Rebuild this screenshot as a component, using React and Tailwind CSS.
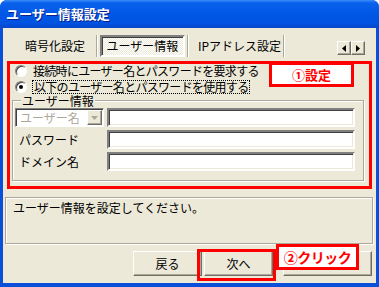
import React from "react";

const raised =
  "border border-t-white border-l-white border-r-[#716f64] border-b-[#716f64] shadow-[inset_-1px_-1px_0_#aca899] bg-[#ece9d8]";
const sunken =
  "border-2 border-t-[#808080] border-l-[#808080] border-r-white border-b-white shadow-[inset_1px_1px_0_#404040,inset_-1px_-1px_0_#ece9d8] bg-white";

function Separator() {
  return <div className="w-[2px] border-l border-l-[#aca899] border-r border-r-white" />;
}

function Radio({ checked }) {
  return (
    <div className="w-[12px] h-[12px] rounded-full border border-t-[#808080] border-l-[#808080] border-r-white border-b-white bg-white shadow-[inset_1px_1px_0_#404040] flex items-center justify-center">
      {checked && <div className="w-[4px] h-[4px] rounded-full bg-black" />}
    </div>
  );
}

function Arrow({ dir }) {
  return (
    <div className={`w-[14px] h-[14px] flex items-center justify-center ${raised}`}>
      <svg width="4" height="7" viewBox="0 0 4 7">
        {dir === "left" ? (
          <polygon points="4,0 4,7 0,3.5" fill="#000" />
        ) : (
          <polygon points="0,0 0,7 4,3.5" fill="#000" />
        )}
      </svg>
    </div>
  );
}

function Field({ label }) {
  return (
    <div className="flex h-[19px]">
      <div className="w-[92px] pl-[4px] flex items-center">{label}</div>
      <div className={`w-[248px] ${sunken}`} />
    </div>
  );
}

export default function App() {
  return (
    <div className="relative w-[379px] h-[287px] bg-white overflow-hidden font-['Noto_Sans_CJK_JP','Noto_Sans',sans-serif] text-[12px] leading-[14px] text-black">
      <div className="w-full h-full flex flex-col rounded-t-[7px] overflow-hidden bg-[#0a4fd8]">
        {/* title bar */}
        <div className="h-[28px] shrink-0 flex items-center pl-[6px] bg-[linear-gradient(180deg,#3d8ef8_0%,#0a62ec_10%,#0058e6_45%,#0053e0_85%,#0a46c8_100%)]">
          <span className="text-white font-bold text-[13px] [text-shadow:1px_1px_0_#0a1e8c]">
            ユーザー情報設定
          </span>
        </div>

        {/* client */}
        <div className="mx-[3px] mb-[4px] flex-1 bg-[#ece9d8] flex flex-col">
          {/* tabs */}
          <div className="mt-[7px] h-[22px] flex">
            <div className="w-[93px] pl-[22px] flex items-center">暗号化設定</div>
            <Separator />
            <div className="ml-[2px] w-[85px] flex items-center justify-center border-2 border-t-[#808080] border-l-[#808080] border-r-white border-b-white shadow-[inset_1px_1px_0_#404040] bg-[repeating-conic-gradient(#ffffff_0_25%,#ece9d8_0_50%)] bg-[length:2px_2px]">
              ユーザー情報
            </div>
            <div className="ml-[2px]" />
            <Separator />
            <div className="w-[94px] pl-[9px] flex items-center">IPアドレス設定</div>
            <Separator />
            <div className="flex-1" />
            <div className="flex self-end mb-[2px] mr-[11px]">
              <Arrow dir="left" />
              <Arrow dir="right" />
            </div>
          </div>

          {/* radios */}
          <div className="mt-[6px] h-[16px] flex items-center pl-[12px]">
            <Radio />
            <span className="ml-[6px] tracking-[-0.7px]">接続時にユーザー名とパスワードを要求する</span>
          </div>
          <div className="h-[15px] flex items-center pl-[12px]">
            <Radio checked />
            <span className="ml-[5px] px-[1px] border border-dotted border-black tracking-[-0.7px] leading-[12px]">
              以下のユーザー名とパスワードを使用する
            </span>
          </div>

          {/* group box */}
          <fieldset className="ml-[9px] w-[352px] border border-[#aca899] shadow-[inset_1px_1px_0_#fff,1px_1px_0_#fff] pt-[1px] pb-[9px] pl-[2px] flex flex-col gap-[3px]">
            <legend className="ml-[6px] px-[1px] bg-[#ece9d8] leading-[13px]">ユーザー情報</legend>
            <div className="flex h-[19px]">
              <div className="w-[89px] flex border border-t-[#808080] border-l-[#808080] border-r-white border-b-white shadow-[inset_1px_1px_0_#404040] bg-white p-[1px]">
                <div className="flex-1 pl-[3px] flex items-center text-[#aca899]">ユーザー名</div>
                <div className={`w-[15px] flex items-center justify-center ${raised}`}>
                  <svg width="7" height="4" viewBox="0 0 7 4">
                    <polygon points="0,0 7,0 3.5,4" fill="#aca899" />
                  </svg>
                </div>
              </div>
              <div className={`ml-[3px] w-[248px] ${sunken}`} />
            </div>
            <Field label="パスワード" />
            <Field label="ドメイン名" />
          </fieldset>

          {/* status */}
          <div className="mt-[16px] ml-[2px] w-[368px] h-[47px] border border-[#aca899] shadow-[inset_1px_1px_0_#fff,1px_1px_0_#fff] pl-[7px] pt-[3px]">
            ユーザー情報を設定してください。
          </div>

          {/* buttons */}
          <div className="mt-[7px] h-[25px] flex pl-[130px]">
            <button className={`w-[69px] h-full flex items-center justify-center ${raised}`}>戻る</button>
            <button className={`ml-[2px] w-[69px] h-full flex items-center justify-center ${raised}`}>次へ</button>
            <button className={`ml-[10px] w-[89px] h-full ${raised}`} />
          </div>
        </div>
      </div>

      {/* annotations */}
      <div className="absolute left-[7px] top-[61px] w-[365px] h-[128px] border-[3px] border-[#ff0000]" />
      <div className="absolute left-[269px] top-[62px] w-[85px] h-[25px] border-[3px] border-[#ff0000] bg-white flex items-center justify-center text-[#ff0000] font-bold text-[13px]">
        ①設定
      </div>
      <div className="absolute left-[197px] top-[249px] w-[79px] h-[32px] border-[3px] border-[#ff0000]" />
      <div className="absolute left-[276px] top-[244px] w-[83px] h-[26px] border-[3px] border-[#ff0000] bg-white flex items-center justify-center text-[#ff0000] font-bold text-[14px] tracking-[-0.5px]">
        ②クリック
      </div>
    </div>
  );
}
